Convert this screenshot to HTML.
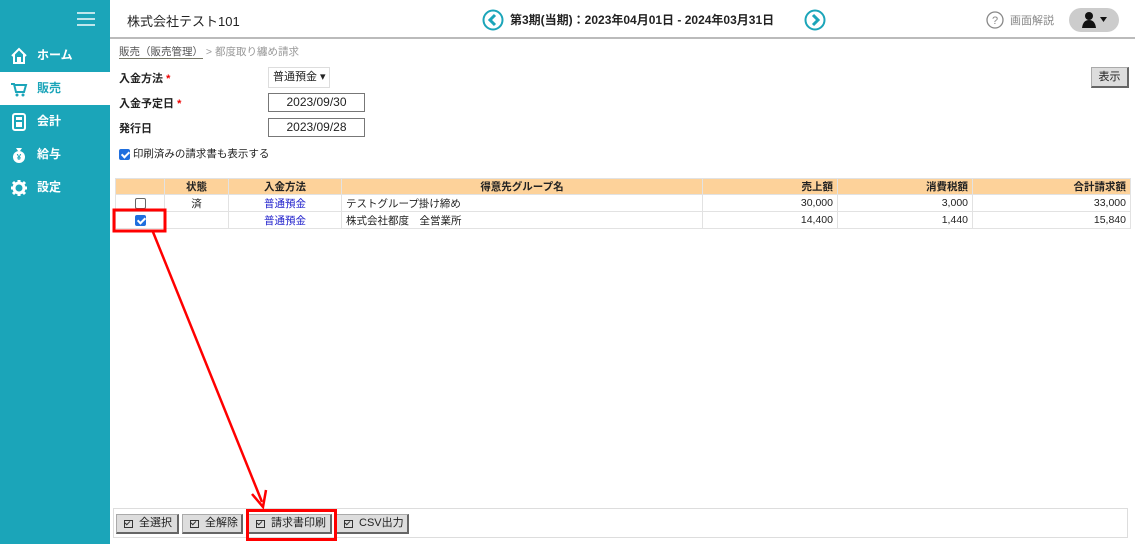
<!DOCTYPE html>
<html><head><meta charset="utf-8"><style>
*{box-sizing:border-box;margin:0;padding:0}
body{width:1135px;height:544px;position:relative;background:#fff;font-family:"Liberation Sans","Noto Sans CJK JP",sans-serif;font-size:11px;color:#222;overflow:hidden}
.side{position:absolute;left:0;top:0;width:110px;height:544px;background:#1ba5b9}
.nav{position:absolute;left:0;width:110px;height:33px;color:#fff;font-weight:bold;font-size:12px;padding-left:37px;line-height:33px}
.nav.act{background:#fff;color:#1ba5b9}
.ic{position:absolute;left:10px;top:8px;width:18px;height:18px}
.top{position:absolute;left:110px;top:0;right:0;height:39px;border-bottom:2px solid #bbb}
.abs{position:absolute}
.lbl{position:absolute;left:119px;font-weight:bold;font-size:11px}
.star{color:#e00}
.inp{position:absolute;left:268px;width:97px;height:19px;border:1px solid #777;text-align:center;line-height:17px;font-size:12px}
table{position:absolute;left:115px;top:178px;width:1016px;border-collapse:collapse;font-size:10.5px}
td,th{border:1px solid #e2e2e2;height:17px;padding:0 4px}
th{background:#fdd29a;font-weight:bold;height:16px}
.r{text-align:right}.c{text-align:center}
a{color:#22c}
.btn{position:absolute;top:514px;height:20px;background:#ddd;border:1px solid #aaa;border-right:2px solid #666;border-bottom:2px solid #666;font-size:11px;line-height:17px;padding-left:22px}
.btn:before{content:"";position:absolute;left:7px;top:5px;width:7px;height:6px;border:1.5px solid #333}
.btn:after{content:"";position:absolute;left:9px;top:5px;width:2px;height:4px;border:solid #333;border-width:0 1.5px 1.5px 0;transform:rotate(45deg)}
.cb{display:inline-block;width:11px;height:11px;border:1px solid #666;border-radius:2px;vertical-align:middle}
.cb.on{background:#1f6fde;border-color:#1f6fde;position:relative}
.cb.on:after{content:"";position:absolute;left:3px;top:0px;width:3px;height:6px;border:solid #fff;border-width:0 2px 2px 0;transform:rotate(45deg)}
</style></head><body>
<div class="side">
 <div class="abs" style="left:77px;top:12px;width:18px;height:2px;background:#bfe6ec;box-shadow:0 6px 0 #bfe6ec,0 12px 0 #bfe6ec"></div>
 <div class="nav" style="top:39px"><svg class="ic" viewBox="0 0 18 18"><path d="M2 9L9 2L16 9M4 7V16H8V11H10V16H14V7" fill="none" stroke="#fff" stroke-width="2"/></svg>ホーム</div>
 <div class="nav act" style="top:72px"><svg class="ic" viewBox="0 0 18 18"><path d="M1 4H4L6 12H14L16 5H5" fill="none" stroke="#1ba5b9" stroke-width="2"/><circle cx="7" cy="15" r="1.5" fill="#1ba5b9"/><circle cx="13" cy="15" r="1.5" fill="#1ba5b9"/></svg>販売</div>
 <div class="nav" style="top:105px"><svg class="ic" viewBox="0 0 18 18"><rect x="3" y="1" width="12" height="16" rx="2" fill="none" stroke="#fff" stroke-width="2"/><rect x="6" y="4" width="6" height="3" fill="#fff"/><rect x="6" y="9" width="6" height="5" fill="#fff"/></svg>会計</div>
 <div class="nav" style="top:138px"><svg class="ic" viewBox="0 0 18 18"><circle cx="9" cy="11" r="6" fill="#fff"/><path d="M6 2H12L10 5H8Z" fill="#fff"/><text x="9" y="14" font-size="8" text-anchor="middle" fill="#1ba5b9" font-weight="bold">¥</text></svg>給与</div>
 <div class="nav" style="top:171px"><svg class="ic" viewBox="0 0 18 18"><circle cx="9" cy="9" r="5" fill="none" stroke="#fff" stroke-width="3"/><path d="M9 1V4M9 14V17M1 9H4M14 9H17M3 3L5 5M13 13L15 15M3 15L5 13M13 5L15 3" stroke="#fff" stroke-width="3"/></svg>設定</div>
</div>
<div class="top">
 <div class="abs" style="left:17px;top:11px;font-size:13px">株式会社テスト101</div>
 <svg class="abs" style="left:372px;top:9px" width="22" height="22"><circle cx="11" cy="11" r="9.5" fill="none" stroke="#1ba5b9" stroke-width="2"/><path d="M13 6L8 11L13 16" fill="none" stroke="#1ba5b9" stroke-width="3"/></svg>
 <div class="abs" style="left:400px;top:11px;font-size:12px;font-weight:bold">第3期(当期)：2023年04月01日 - 2024年03月31日</div>
 <svg class="abs" style="left:694px;top:9px" width="22" height="22"><circle cx="11" cy="11" r="9.5" fill="none" stroke="#1ba5b9" stroke-width="2"/><path d="M9 6L14 11L9 16" fill="none" stroke="#1ba5b9" stroke-width="3"/></svg>
 <svg class="abs" style="left:876px;top:11px" width="18" height="18"><circle cx="9" cy="9" r="8" fill="none" stroke="#888" stroke-width="1.3"/><text x="9" y="13" font-size="11" text-anchor="middle" fill="#888">?</text></svg>
 <div class="abs" style="left:900px;top:12px;color:#888;font-size:11px">画面解説</div>
 <div class="abs" style="left:959px;top:8px;width:50px;height:24px;border-radius:12px;background:#ccc"><svg width="50" height="24"><circle cx="20" cy="8" r="4" fill="#111"/><path d="M13 20Q14 12 20 12Q26 12 27 20Z" fill="#111"/><path d="M31 9H38L34.5 14Z" fill="#111"/></svg></div>
</div>
<div class="abs" style="left:119px;top:44px;font-size:10.5px;color:#555"><span style="border-bottom:1px solid #776">販売（販売管理）</span> <span style="color:#999">&gt; 都度取り纏め請求</span></div>
<div class="lbl" style="top:70px">入金方法 <span class="star">*</span></div>
<div class="abs" style="left:268px;top:67px;width:62px;height:21px;border:1px solid #ddd;font-size:11px;line-height:19px;padding-left:4px">普通預金 ▾</div>
<div class="lbl" style="top:95px">入金予定日 <span class="star">*</span></div>
<div class="inp" style="top:93px">2023/09/30</div>
<div class="lbl" style="top:120px">発行日</div>
<div class="inp" style="top:118px">2023/09/28</div>
<div class="abs" style="left:119px;top:146px;font-size:10.5px"><span class="cb on"></span> 印刷済みの請求書も表示する</div>
<div class="abs" style="left:1091px;top:67px;width:38px;height:21px;background:#ddd;border:1px solid #aaa;border-right:2px solid #666;border-bottom:2px solid #666;text-align:center;line-height:18px;font-size:11px">表示</div>
<table>
<tr><th style="width:49px"></th><th style="width:64px">状態</th><th style="width:113px">入金方法</th><th style="width:361px">得意先グループ名</th><th class="r" style="width:135px">売上額</th><th class="r" style="width:135px">消費税額</th><th class="r">合計請求額</th></tr>
<tr><td class="c"><span class="cb"></span></td><td class="c">済</td><td class="c"><a>普通預金</a></td><td>テストグループ掛け締め</td><td class="r">30,000</td><td class="r">3,000</td><td class="r">33,000</td></tr>
<tr><td class="c"><span class="cb on"></span></td><td></td><td class="c"><a>普通預金</a></td><td>株式会社都度　全営業所</td><td class="r">14,400</td><td class="r">1,440</td><td class="r">15,840</td></tr>
</table>
<div class="abs" style="left:113px;top:508px;width:1015px;height:30px;border:1px solid #ddd"></div>
<div class="btn" style="left:116px;width:63px">全選択</div>
<div class="btn" style="left:182px;width:61px">全解除</div>
<div class="btn" style="left:248px;width:84px">請求書印刷</div>
<div class="btn" style="left:336px;width:73px">CSV出力</div>
<svg class="abs" style="left:0;top:0" width="1135" height="544">
<rect x="114" y="210" width="51" height="21" fill="none" stroke="#f00" stroke-width="3"/>
<rect x="247.5" y="510.5" width="88" height="29" fill="none" stroke="#f00" stroke-width="3"/>
<path d="M153 232L262 502" stroke="#f00" stroke-width="2.5"/>
<path d="M252 494L263 507L266 490" fill="none" stroke="#f00" stroke-width="2.5"/>
</svg>
</body></html>
